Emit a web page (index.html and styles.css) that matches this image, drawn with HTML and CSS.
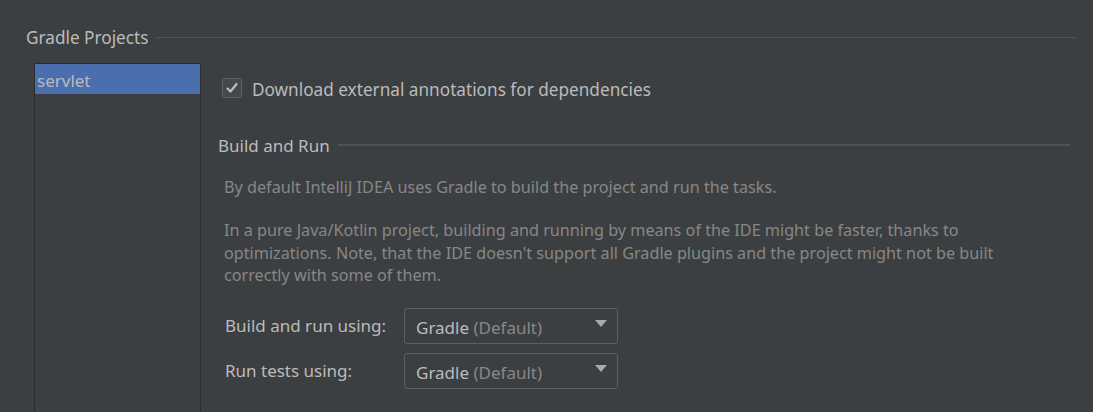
FILE: index.html
```html
<!DOCTYPE html>
<html>
<head>
<meta charset="utf-8">
<link rel="stylesheet" href="styles.css">
</head>
<body>
<div class="page">
  <div class="title-row">
    <span class="title">Gradle Projects</span>
    <span class="rule"></span>
  </div>
  <div class="main">
    <div class="list">
      <div class="item selected">servlet</div>
    </div>
    <div class="content">
      <label class="check-row">
        <span class="checkbox">
          <svg width="14" height="14" viewBox="0 0 14 14"><path d="M2.5 7.5 L5.5 10.5 L11.5 3" fill="none" stroke="#bdbdbd" stroke-width="2.2" stroke-linecap="round" stroke-linejoin="round"/></svg>
        </span>
        <span class="check-label">Download external annotations for dependencies</span>
      </label>
      <div class="section-row">
        <span class="section">Build and Run</span>
        <span class="rule2"></span>
      </div>
      <div class="desc">
        <p>By default IntelliJ IDEA uses Gradle to build the project and run the tasks.</p>
        <p>In a pure Java/Kotlin project, building and running by means of the IDE might be faster, thanks to<br>optimizations. Note, that the IDE doesn't support all Gradle plugins and the project might not be built<br>correctly with some of them.</p>
      </div>
      <div class="form">
        <div class="form-row">
          <span class="label">Build and run using:</span>
          <div class="combo"><span class="val">Gradle <span class="dim">(Default)</span></span><span class="arrow"></span></div>
        </div>
        <div class="form-row">
          <span class="label">Run tests using:</span>
          <div class="combo"><span class="val">Gradle <span class="dim">(Default)</span></span><span class="arrow"></span></div>
        </div>
      </div>
    </div>
  </div>
</div>
</body>
</html>
```

FILE: styles.css
```css
html, body {
  margin: 0;
  padding: 0;
  background: #3c3f41;
  height: 100%;
  overflow: hidden;
}
.page {
  font-family: "Noto Sans", "Open Sans", sans-serif;
  color: #bbbbbb;
  height: 412px;
  display: flex;
  flex-direction: column;
}
.title-row {
  display: flex;
  align-items: center;
  padding: 27px 17px 0 26px;
  height: 22px;
}
.title {
  font-size: 17.2px;
  line-height: 22px;
  color: #bbbbbb;
}
.rule {
  flex: 1;
  height: 1px;
  background: #515151;
  margin-left: 8px;
  margin-top: -2px;
}
.main {
  display: flex;
  flex: 1;
  margin-top: 14px;
  margin-left: 34px;
}
.list {
  width: 165px;
  border: 1px solid #2b2b2b;
  border-bottom: none;
  background: #3c3f41;
}
.item {
  height: 30px;
  line-height: 30px;
  padding-left: 2px;
  font-size: 17px;
}
.selected {
  background: #4b6eaf;
  box-sizing: border-box;
  padding-top: 3px;
  line-height: 27px;
}
.content {
  flex: 1;
  padding-left: 17px;
  padding-right: 23px;
}
.check-row {
  display: flex;
  align-items: center;
  margin-left: 4px;
  margin-top: 14px;
  height: 22px;
}
.checkbox {
  width: 18px;
  height: 18px;
  border: 1px solid #5e6060;
  border-radius: 3px;
  background: #43494a;
  display: flex;
  align-items: center;
  justify-content: center;
}
.check-label {
  margin-left: 10px;
  font-size: 17.2px;
  padding-top: 2px;
}
.section-row {
  display: flex;
  align-items: center;
  margin-top: 35px;
  height: 22px;
}
.section {
  font-size: 17px;
}
.rule2 {
  flex: 1;
  height: 2px;
  background: #4f5152;
  margin-left: 8px;
}
.desc {
  color: #878787;
  font-size: 16.2px;
  line-height: 22.5px;
  margin-left: 6px;
  margin-top: 19.5px;
}
.desc p {
  margin: 0 0 21px 0;
}
.form {
  margin-left: 7px;
  margin-top: 12.5px;
  display: flex;
  flex-direction: column;
  gap: 9px;
}
.form-row {
  display: flex;
  align-items: center;
}
.label {
  width: 179px;
  font-size: 17px;
}
.combo {
  border: 1px solid #5e6060;
  border-radius: 3px;
  display: flex;
  align-items: center;
  justify-content: space-between;
  padding: 0 10px 0 11px;
  box-sizing: border-box;
  width: 214px;
  height: 36px;
}
.val {
  font-size: 17px;
  padding-top: 3px;
}
.dim {
  color: #888888;
}
.arrow {
  width: 0;
  height: 0;
  border-left: 6.5px solid transparent;
  border-right: 6.5px solid transparent;
  border-top: 7px solid #a9a9a9;
  margin-top: -4px;
}
```
